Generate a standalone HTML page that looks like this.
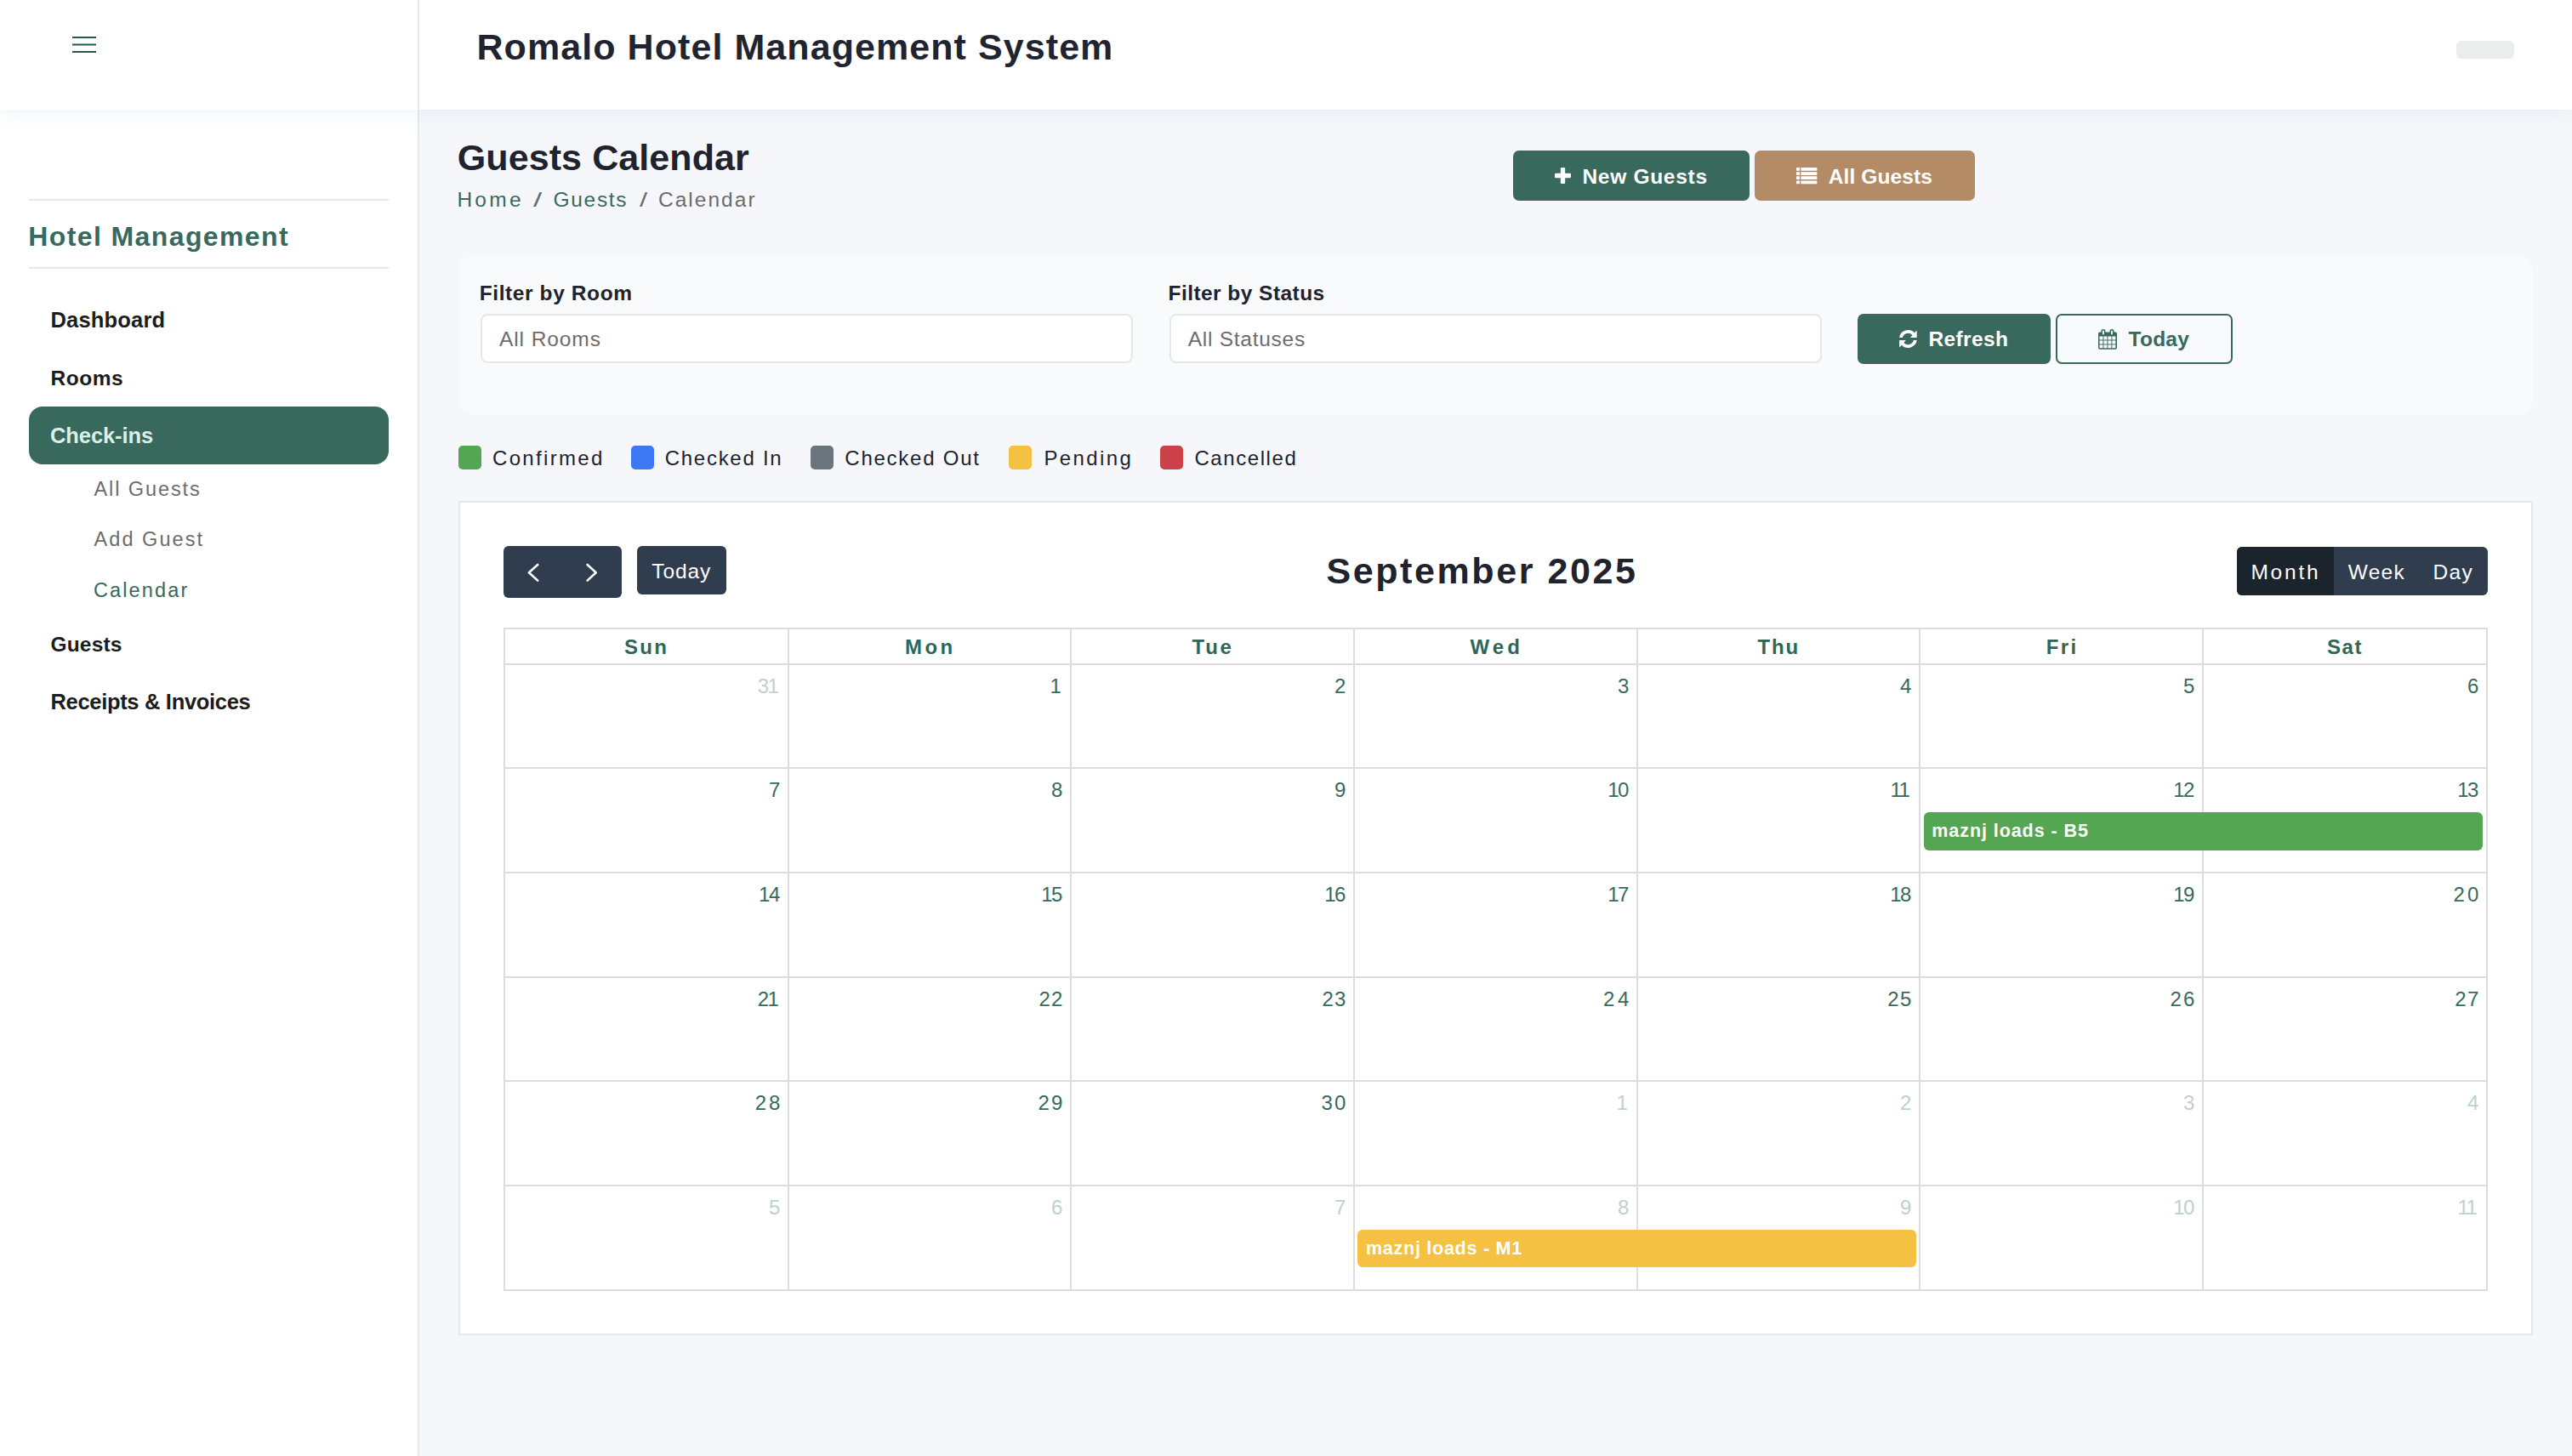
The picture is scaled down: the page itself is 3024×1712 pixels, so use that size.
<!DOCTYPE html>
<html lang="en">
<head>
<meta charset="utf-8">
<title>Guests Calendar - Romalo Hotel Management System</title>
<meta name="viewport" content="width=3024">
<style>
*{margin:0;padding:0;box-sizing:content-box;}
html,body{width:3024px;height:1712px;overflow:hidden;}
body{position:relative;background:#f5f7fb;font-family:"Liberation Sans", sans-serif;font-weight:400;}
body *{position:absolute;display:block;white-space:nowrap;font-style:normal;text-decoration:none;}
nav,main,ul,li{left:0;top:0;width:0;height:0;list-style:none;}
h1,h2,b,label,a,span{font-weight:400;}
button{font:inherit;border:0;background:none;}
svg{overflow:visible;}
</style>
</head>
<body>
 <aside style="left:0.0px;top:0.0px;width:493.0px;height:1712.0px;background:#fff;border-right:2px solid #e3eaed;box-sizing:border-box;">
  <div style="left:34.0px;top:234.0px;width:422.7px;height:2.0px;background:#e3eaed;"></div>
  <h2 style="left:33.3px;top:258.9px;font-size:32px;line-height:38px;letter-spacing:1.39px;color:#39695d;font-weight:700;">Hotel Management</h2>
  <div style="left:34.0px;top:314.0px;width:422.7px;height:2.0px;background:#e3eaed;"></div>
  <nav style="left:0.0px;top:0.0px;">
   <a style="left:59.5px;top:360.7px;font-size:25.5px;line-height:31px;letter-spacing:0.17px;color:#1c1c1c;font-weight:700;">Dashboard</a>
   <a style="left:59.5px;top:430.3px;font-size:24.5px;line-height:29px;letter-spacing:0.52px;color:#1c1c1c;font-weight:700;">Rooms</a>
   <a style="left:34.0px;top:478.0px;width:423.0px;height:67.8px;background:#39695d;border-radius:16px;">
    <span style="left:25.0px;top:18.6px;font-size:25.5px;line-height:31px;letter-spacing:-0.09px;color:#d9f0ea;font-weight:700;">Check-ins</span>
   </a>
   <a style="left:110.5px;top:560.5px;font-size:23.5px;line-height:28px;letter-spacing:1.91px;color:#6c6c6c;">All Guests</a>
   <a style="left:110.5px;top:619.9px;font-size:23.5px;line-height:28px;letter-spacing:2.07px;color:#6c6c6c;">Add Guest</a>
   <a style="left:110.0px;top:679.9px;font-size:23.5px;line-height:28px;letter-spacing:2.12px;color:#39695d;">Calendar</a>
   <a style="left:59.5px;top:743.0px;font-size:24.5px;line-height:29px;letter-spacing:0.17px;color:#1c1c1c;font-weight:700;">Guests</a>
   <a style="left:59.5px;top:809.9px;font-size:25.5px;line-height:31px;letter-spacing:-0.32px;color:#1c1c1c;font-weight:700;">Receipts &amp; Invoices</a>
  </nav>
 </aside>
 <main style="left:0.0px;top:0.0px;">
  <h2 style="left:537.8px;top:159.1px;font-size:43px;line-height:52px;letter-spacing:0.09px;color:#20232e;font-weight:700;">Guests Calendar</h2>
  <nav aria-label="breadcrumb" style="left:0.0px;top:0.0px;">
   <a style="left:537.4px;top:220.4px;font-size:24.5px;line-height:29px;letter-spacing:3.29px;color:#39695d;">Home</a>
   <span style="left:627.0px;top:220.4px;font-size:24.5px;line-height:29px;letter-spacing:0.00px;color:#6c6c6c;transform:scaleX(1.50);transform-origin:0px 50%;">/</span>
   <a style="left:650.6px;top:220.4px;font-size:24.5px;line-height:29px;letter-spacing:1.67px;color:#39695d;">Guests</a>
   <span style="left:751.6px;top:220.4px;font-size:24.5px;line-height:29px;letter-spacing:0.00px;color:#6c6c6c;transform:scaleX(1.34);transform-origin:0px 50%;">/</span>
   <span style="left:774.0px;top:220.4px;font-size:24.5px;line-height:29px;letter-spacing:2.02px;color:#6c6c6c;">Calendar</span>
  </nav>
  <a class="btn" style="left:1778.8px;top:177.0px;width:278.2px;height:58.8px;background:#39695d;border-radius:7px;">
   <svg viewBox="0 0 19 19" aria-hidden="true" style="left:49.1px;top:20.1px;width:19.0px;height:19.0px;fill:#fff;"><rect x="6.850" y="0" width="5.300" height="19" rx="1.100"/><rect x="0" y="6.850" width="19" height="5.300" rx="1.100"/></svg>
   <span style="left:81.6px;top:15.7px;font-size:24.5px;line-height:29px;letter-spacing:0.71px;color:#fff;font-weight:700;">New Guests</span>
  </a>
  <a class="btn" style="left:2063.0px;top:177.0px;width:259.0px;height:58.8px;background:#b38b66;border-radius:7px;">
   <svg viewBox="0 0 24.4 19.2" aria-hidden="true" style="left:49.1px;top:20.0px;width:24.4px;height:19.2px;fill:#fff;"><rect x="0" y="0" width="4" height="3.800" rx=".4"/><rect x="5.300" y="0" width="19.100" height="3.800" rx=".4"/><rect x="0" y="5.13" width="4" height="3.800" rx=".4"/><rect x="5.300" y="5.13" width="19.100" height="3.800" rx=".4"/><rect x="0" y="10.27" width="4" height="3.800" rx=".4"/><rect x="5.300" y="10.27" width="19.100" height="3.800" rx=".4"/><rect x="0" y="15.4" width="4" height="3.800" rx=".4"/><rect x="5.300" y="15.4" width="19.100" height="3.800" rx=".4"/></svg>
   <span style="left:86.7px;top:15.7px;font-size:24.5px;line-height:29px;letter-spacing:0.11px;color:#fff;font-weight:700;">All Guests</span>
  </a>
  <section style="left:539.0px;top:301.5px;width:2439.0px;height:185.5px;background:#f9fafc;border-radius:16px;">
   <label style="left:24.7px;top:28.3px;font-size:24.5px;line-height:29px;letter-spacing:0.60px;color:#20232e;font-weight:700;">Filter by Room</label>
   <div class="sel" style="left:25.7px;top:67.7px;width:763.5px;height:53.6px;background:#fff;border:2px solid #e3e8ed;border-radius:8px;">
    <span style="left:20.3px;top:12.6px;font-size:24.5px;line-height:29px;letter-spacing:0.91px;color:#6c6c6c;">All Rooms</span>
   </div>
   <label style="left:834.5px;top:28.3px;font-size:24.5px;line-height:29px;letter-spacing:0.45px;color:#20232e;font-weight:700;">Filter by Status</label>
   <div class="sel" style="left:835.5px;top:67.7px;width:763.7px;height:53.6px;background:#fff;border:2px solid #e3e8ed;border-radius:8px;">
    <span style="left:20.3px;top:12.6px;font-size:24.5px;line-height:29px;letter-spacing:0.73px;color:#6c6c6c;">All Statuses</span>
   </div>
   <button class="btn" style="left:1645.0px;top:67.5px;width:227.0px;height:59.0px;background:#39695d;border-radius:7px;">
    <svg viewBox="0 0 20.8 21" aria-hidden="true" style="left:48.8px;top:19.0px;width:20.8px;height:21.0px;fill:#fff;"><path d="M.1 8.900A10.440 10.440 0 0 1 17.970 3.300L20.100.9Q20.700.6 20.700 1.400V8.900H13L15.490 6.100A6.730 6.730 0 0 0 3.860 8.900z"/><path transform="rotate(180 10.4 10.5)" d="M.1 8.900A10.440 10.440 0 0 1 17.970 3.300L20.100.9Q20.700.6 20.700 1.400V8.900H13L15.490 6.100A6.730 6.730 0 0 0 3.860 8.900z"/></svg>
    <span style="left:83.4px;top:15.2px;font-size:24.5px;line-height:29px;letter-spacing:0.39px;color:#fff;font-weight:700;">Refresh</span>
   </button>
   <button class="btn" style="left:1878.2px;top:67.5px;width:203.8px;height:55.0px;border:2px solid #39695d;border-radius:7px;">
    <svg viewBox="0 0 22 23.8" aria-hidden="true" style="left:47.4px;top:15.5px;width:22.0px;height:23.8px;fill:#39695d;"><rect x="0" y="3.600" width="22" height="20.200" rx="1.800"/><rect x="3.400" y="0" width="5" height="6.800" rx="2.500"/><rect x="13.500" y="0" width="5" height="6.800" rx="2.500"/><g fill="#f9fafc"><rect x="1.5" y="8.5" width="4" height="4"/><rect x="1.5" y="13.45" width="4" height="4"/><rect x="1.5" y="18.4" width="4" height="3.85"/><rect x="6.45" y="8.5" width="4" height="4"/><rect x="6.45" y="13.45" width="4" height="4"/><rect x="6.45" y="18.4" width="4" height="3.85"/><rect x="11.4" y="8.5" width="4" height="4"/><rect x="11.4" y="13.45" width="4" height="4"/><rect x="11.4" y="18.4" width="4" height="3.85"/><rect x="16.35" y="8.5" width="4" height="4"/><rect x="16.35" y="13.45" width="4" height="4"/><rect x="16.35" y="18.4" width="4" height="3.85"/><rect x="4.950" y="1.600" width="1.900" height="4.900" rx=".95"/><rect x="15.050" y="1.600" width="1.900" height="4.900" rx=".95"/></g></svg>
    <span style="left:83.4px;top:13.2px;font-size:24.5px;line-height:29px;letter-spacing:0.22px;color:#39695d;font-weight:700;">Today</span>
   </button>
  </section>
  <ul class="legend" style="left:0.0px;top:0.0px;">
   <li style="left:0.0px;top:0.0px;">
    <i style="left:538.8px;top:524.0px;width:27.0px;height:28.0px;background:#55a653;border-radius:5px;"></i>
    <span style="left:579.0px;top:524.1px;font-size:24px;line-height:29px;letter-spacing:2.33px;color:#20232e;">Confirmed</span>
   </li>
   <li style="left:0.0px;top:0.0px;">
    <i style="left:741.6px;top:524.0px;width:27.0px;height:28.0px;background:#3b78f2;border-radius:5px;"></i>
    <span style="left:781.7px;top:524.1px;font-size:24px;line-height:29px;letter-spacing:1.73px;color:#20232e;">Checked In</span>
   </li>
   <li style="left:0.0px;top:0.0px;">
    <i style="left:952.6px;top:524.0px;width:27.0px;height:28.0px;background:#6c757d;border-radius:5px;"></i>
    <span style="left:993.3px;top:524.1px;font-size:24px;line-height:29px;letter-spacing:1.76px;color:#20232e;">Checked Out</span>
   </li>
   <li style="left:0.0px;top:0.0px;">
    <i style="left:1186.1px;top:524.0px;width:27.0px;height:28.0px;background:#f4c143;border-radius:5px;"></i>
    <span style="left:1227.4px;top:524.1px;font-size:24px;line-height:29px;letter-spacing:2.39px;color:#20232e;">Pending</span>
   </li>
   <li style="left:0.0px;top:0.0px;">
    <i style="left:1364.3px;top:524.0px;width:27.0px;height:28.0px;background:#cd414a;border-radius:5px;"></i>
    <span style="left:1404.4px;top:524.1px;font-size:24px;line-height:29px;letter-spacing:1.58px;color:#20232e;">Cancelled</span>
   </li>
  </ul>
  <section style="left:538.8px;top:588.8px;width:2434.8px;height:977.5px;background:#fff;border:2px solid #e3eaed;">
   <div class="grp" style="left:51.2px;top:51.2px;width:139.2px;height:61.0px;background:#2f3d4f;border-radius:6px;">
    <svg viewBox="0 0 20 27" aria-hidden="true" style="left:24.0px;top:18.0px;width:20.0px;height:27.0px;fill:none;stroke:#fff;stroke-width:2.6;stroke-linecap:round;stroke-linejoin:round;"><path d="M16.200 4 5.900 13.300l10.300 9.300"/></svg>
    <svg viewBox="0 0 20 27" aria-hidden="true" style="left:94.0px;top:18.0px;width:20.0px;height:27.0px;fill:none;stroke:#fff;stroke-width:2.6;stroke-linecap:round;stroke-linejoin:round;"><path d="M4.600 4l10.100 9.300-10.100 9.300"/></svg>
   </div>
   <button class="btn" style="left:208.3px;top:51.2px;width:105.0px;height:56.8px;background:#2f3d4f;border-radius:6px;">
    <span style="left:17.1px;top:14.9px;font-size:24.5px;line-height:29px;letter-spacing:0.94px;color:#fff;">Today</span>
   </button>
   <h2 style="left:1018.7px;top:54.1px;font-size:43px;line-height:52px;letter-spacing:2.58px;color:#20232e;font-weight:700;">September 2025</h2>
   <div class="grp" style="left:2089.2px;top:52.2px;width:295.2px;height:57.0px;background:#2f3d4f;border-radius:6px;overflow:hidden;">
    <button class="btn" style="left:0.0px;top:0.0px;width:113.8px;height:57.0px;background:#1b232d;">
     <span style="left:16.4px;top:15.3px;font-size:24.5px;line-height:29px;letter-spacing:2.81px;color:#fff;">Month</span>
    </button>
    <button class="btn" style="left:113.8px;top:0.0px;width:101.2px;height:57.0px;">
     <span style="left:17.0px;top:15.3px;font-size:24.5px;line-height:29px;letter-spacing:1.26px;color:#fff;">Week</span>
    </button>
    <button class="btn" style="left:215.0px;top:0.0px;width:80.2px;height:57.0px;">
     <span style="left:15.6px;top:15.3px;font-size:24.5px;line-height:29px;letter-spacing:1.24px;color:#fff;">Day</span>
    </button>
   </div>
   <div class="grid" role="grid" style="left:51.2px;top:147.2px;width:2333.0px;height:780.0px;">
    <i style="left:0.0px;top:0.0px;width:2333.0px;height:2.0px;background:#dddddd;"></i>
    <i style="left:0.0px;top:42.0px;width:2333.0px;height:2.0px;background:#dddddd;"></i>
    <i style="left:0.0px;top:164.0px;width:2333.0px;height:2.0px;background:#dddddd;"></i>
    <i style="left:0.0px;top:287.0px;width:2333.0px;height:2.0px;background:#dddddd;"></i>
    <i style="left:0.0px;top:410.0px;width:2333.0px;height:2.0px;background:#dddddd;"></i>
    <i style="left:0.0px;top:532.0px;width:2333.0px;height:2.0px;background:#dddddd;"></i>
    <i style="left:0.0px;top:655.0px;width:2333.0px;height:2.0px;background:#dddddd;"></i>
    <i style="left:0.0px;top:778.0px;width:2333.0px;height:2.0px;background:#dddddd;"></i>
    <i style="left:0.0px;top:0.0px;width:2.0px;height:780.0px;background:#dddddd;"></i>
    <i style="left:334.0px;top:0.0px;width:2.0px;height:780.0px;background:#dddddd;"></i>
    <i style="left:666.0px;top:0.0px;width:2.0px;height:780.0px;background:#dddddd;"></i>
    <i style="left:999.0px;top:0.0px;width:2.0px;height:780.0px;background:#dddddd;"></i>
    <i style="left:1332.0px;top:0.0px;width:2.0px;height:780.0px;background:#dddddd;"></i>
    <i style="left:1664.0px;top:0.0px;width:2.0px;height:780.0px;background:#dddddd;"></i>
    <i style="left:1997.0px;top:0.0px;width:2.0px;height:780.0px;background:#dddddd;"></i>
    <i style="left:2331.0px;top:0.0px;width:2.0px;height:780.0px;background:#dddddd;"></i>
    <b style="left:142.0px;top:7.8px;font-size:24px;line-height:29px;letter-spacing:2.32px;color:#2f6657;font-weight:700;">Sun</b>
    <b style="left:471.9px;top:7.8px;font-size:24px;line-height:29px;letter-spacing:3.52px;color:#2f6657;font-weight:700;">Mon</b>
    <b style="left:809.6px;top:7.8px;font-size:24px;line-height:29px;letter-spacing:2.73px;color:#2f6657;font-weight:700;">Tue</b>
    <b style="left:1136.6px;top:7.8px;font-size:24px;line-height:29px;letter-spacing:4.02px;color:#2f6657;font-weight:700;">Wed</b>
    <b style="left:1474.6px;top:7.8px;font-size:24px;line-height:29px;letter-spacing:1.84px;color:#2f6657;font-weight:700;">Thu</b>
    <b style="left:1813.7px;top:7.8px;font-size:24px;line-height:29px;letter-spacing:2.45px;color:#2f6657;font-weight:700;">Fri</b>
    <b style="left:2143.9px;top:7.8px;font-size:24px;line-height:29px;letter-spacing:1.62px;color:#2f6657;font-weight:700;">Sat</b>
    <span style="left:298.8px;top:54.1px;font-size:24px;line-height:29px;letter-spacing:-1.60px;color:#bcd2cb;">31</span>
    <span style="left:642.5px;top:54.1px;font-size:24px;line-height:29px;letter-spacing:0.00px;color:#376a5d;">1</span>
    <span style="left:977.0px;top:54.1px;font-size:24px;line-height:29px;letter-spacing:0.00px;color:#376a5d;">2</span>
    <span style="left:1310.0px;top:54.1px;font-size:24px;line-height:29px;letter-spacing:0.00px;color:#376a5d;">3</span>
    <span style="left:1642.0px;top:54.1px;font-size:24px;line-height:29px;letter-spacing:0.00px;color:#376a5d;">4</span>
    <span style="left:1975.0px;top:54.1px;font-size:24px;line-height:29px;letter-spacing:0.00px;color:#376a5d;">5</span>
    <span style="left:2309.0px;top:54.1px;font-size:24px;line-height:29px;letter-spacing:0.00px;color:#376a5d;">6</span>
    <span style="left:312.0px;top:176.1px;font-size:24px;line-height:29px;letter-spacing:0.00px;color:#376a5d;">7</span>
    <span style="left:644.0px;top:176.1px;font-size:24px;line-height:29px;letter-spacing:0.00px;color:#376a5d;">8</span>
    <span style="left:977.0px;top:176.1px;font-size:24px;line-height:29px;letter-spacing:0.00px;color:#376a5d;">9</span>
    <span style="left:1298.3px;top:176.1px;font-size:24px;line-height:29px;letter-spacing:-1.60px;color:#376a5d;">10</span>
    <span style="left:1630.5px;top:176.1px;font-size:24px;line-height:29px;letter-spacing:-1.60px;color:#376a5d;">11</span>
    <span style="left:1963.3px;top:176.1px;font-size:24px;line-height:29px;letter-spacing:-1.60px;color:#376a5d;">12</span>
    <span style="left:2297.3px;top:176.1px;font-size:24px;line-height:29px;letter-spacing:-1.60px;color:#376a5d;">13</span>
    <span style="left:300.1px;top:299.1px;font-size:24px;line-height:29px;letter-spacing:-1.44px;color:#376a5d;">14</span>
    <span style="left:632.3px;top:299.1px;font-size:24px;line-height:29px;letter-spacing:-1.60px;color:#376a5d;">15</span>
    <span style="left:965.3px;top:299.1px;font-size:24px;line-height:29px;letter-spacing:-1.60px;color:#376a5d;">16</span>
    <span style="left:1298.3px;top:299.1px;font-size:24px;line-height:29px;letter-spacing:-1.60px;color:#376a5d;">17</span>
    <span style="left:1630.3px;top:299.1px;font-size:24px;line-height:29px;letter-spacing:-1.60px;color:#376a5d;">18</span>
    <span style="left:1963.3px;top:299.1px;font-size:24px;line-height:29px;letter-spacing:-1.60px;color:#376a5d;">19</span>
    <span style="left:2292.6px;top:299.1px;font-size:24px;line-height:29px;letter-spacing:3.08px;color:#376a5d;">20</span>
    <span style="left:298.8px;top:422.1px;font-size:24px;line-height:29px;letter-spacing:-1.60px;color:#376a5d;">21</span>
    <span style="left:629.5px;top:422.1px;font-size:24px;line-height:29px;letter-spacing:1.16px;color:#376a5d;">22</span>
    <span style="left:962.4px;top:422.1px;font-size:24px;line-height:29px;letter-spacing:1.25px;color:#376a5d;">23</span>
    <span style="left:1293.1px;top:422.1px;font-size:24px;line-height:29px;letter-spacing:3.51px;color:#376a5d;">24</span>
    <span style="left:1627.3px;top:422.1px;font-size:24px;line-height:29px;letter-spacing:1.32px;color:#376a5d;">25</span>
    <span style="left:1959.5px;top:422.1px;font-size:24px;line-height:29px;letter-spacing:2.19px;color:#376a5d;">26</span>
    <span style="left:2294.3px;top:422.1px;font-size:24px;line-height:29px;letter-spacing:1.37px;color:#376a5d;">27</span>
    <span style="left:295.8px;top:544.1px;font-size:24px;line-height:29px;letter-spacing:2.88px;color:#376a5d;">28</span>
    <span style="left:628.5px;top:544.1px;font-size:24px;line-height:29px;letter-spacing:2.19px;color:#376a5d;">29</span>
    <span style="left:961.5px;top:544.1px;font-size:24px;line-height:29px;letter-spacing:2.17px;color:#376a5d;">30</span>
    <span style="left:1308.5px;top:544.1px;font-size:24px;line-height:29px;letter-spacing:0.00px;color:#bcd2cb;">1</span>
    <span style="left:1642.0px;top:544.1px;font-size:24px;line-height:29px;letter-spacing:0.00px;color:#bcd2cb;">2</span>
    <span style="left:1975.0px;top:544.1px;font-size:24px;line-height:29px;letter-spacing:0.00px;color:#bcd2cb;">3</span>
    <span style="left:2309.0px;top:544.1px;font-size:24px;line-height:29px;letter-spacing:0.00px;color:#bcd2cb;">4</span>
    <span style="left:312.0px;top:667.1px;font-size:24px;line-height:29px;letter-spacing:0.00px;color:#bcd2cb;">5</span>
    <span style="left:644.0px;top:667.1px;font-size:24px;line-height:29px;letter-spacing:0.00px;color:#bcd2cb;">6</span>
    <span style="left:977.0px;top:667.1px;font-size:24px;line-height:29px;letter-spacing:0.00px;color:#bcd2cb;">7</span>
    <span style="left:1310.0px;top:667.1px;font-size:24px;line-height:29px;letter-spacing:0.00px;color:#bcd2cb;">8</span>
    <span style="left:1642.0px;top:667.1px;font-size:24px;line-height:29px;letter-spacing:0.00px;color:#bcd2cb;">9</span>
    <span style="left:1963.3px;top:667.1px;font-size:24px;line-height:29px;letter-spacing:-1.60px;color:#bcd2cb;">10</span>
    <span style="left:2297.5px;top:667.1px;font-size:24px;line-height:29px;letter-spacing:-1.60px;color:#bcd2cb;">11</span>
    <div class="ev" style="left:1670.3px;top:217.3px;width:657.2px;height:44.7px;background:#55a653;border-radius:6px;">
     <span style="left:9.0px;top:8.3px;font-size:21.5px;line-height:26px;letter-spacing:0.93px;color:#fff;font-weight:700;">maznj loads - B5</span>
    </div>
    <div class="ev" style="left:1004.4px;top:708.2px;width:656.6px;height:44.3px;background:#f4c143;border-radius:6px;">
     <span style="left:9.6px;top:8.4px;font-size:21.5px;line-height:26px;letter-spacing:0.74px;color:#fff;font-weight:700;">maznj loads - M1</span>
    </div>
   </div>
  </section>
 </main>
 <header class="hdr" style="left:0.0px;top:0.0px;width:3024.0px;height:129.0px;background:#fff;box-shadow:0 6px 20px rgba(150,165,205,.11);">
  <div style="left:491.0px;top:0.0px;width:2.0px;height:129.0px;background:#e3eaed;"></div>
  <svg viewBox="0 0 28 19" aria-hidden="true" style="left:85.0px;top:43.0px;width:28.0px;height:19.0px;fill:#26594d;"><rect y="0" width="28" height="2"/><rect y="8.500" width="28" height="2"/><rect y="17" width="28" height="2"/></svg>
  <h1 style="left:560.5px;top:28.5px;font-size:43px;line-height:52px;letter-spacing:1.07px;color:#1f2430;font-weight:700;">Romalo Hotel Management System</h1>
  <div style="left:2888.0px;top:48.2px;width:67.7px;height:20.6px;background:#e9eeec;border-radius:6px;"></div>
 </header>
</body>
</html>
